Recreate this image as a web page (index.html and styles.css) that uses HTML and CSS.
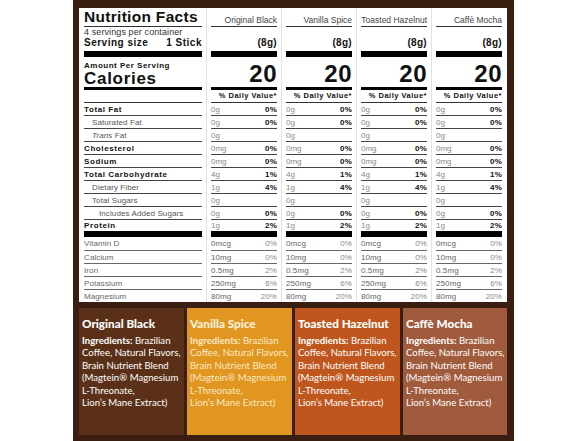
FILE: index.html
```html
<!DOCTYPE html>
<html>
<head>
<meta charset="utf-8">
<link rel="stylesheet" href="styles.css">
</head>
<body>
<div class="frame">
  <div class="panel">
    <div class="col label-col">
      <div class="r-head"><span class="title">Nutrition Facts</span></div>
      <div class="r-serv">
        <div class="servings">4 servings per container</div>
        <div class="serving-size"><span>Serving size</span><span>1 Stick</span></div>
      </div>
      <div class="bar-thick"></div>
      <div class="r-cal">
        <div class="amount">Amount Per Serving</div>
        <div class="calories">Calories</div>
      </div>
      <div class="bar-med"></div>
      <div class="r-dv"></div>
      <div class="row main">Total Fat</div>
      <div class="row sub">Saturated Fat</div>
      <div class="row sub"><span><i>Trans</i> Fat</span></div>
      <div class="row main">Cholesterol</div>
      <div class="row main">Sodium</div>
      <div class="row main">Total Carbohydrate</div>
      <div class="row sub">Dietary Fiber</div>
      <div class="row sub">Total Sugars</div>
      <div class="row sub2">Includes Added Sugars</div>
      <div class="row main last">Protein</div>
      <div class="bar-thick"></div>
      <div class="row vit first">Vitamin D</div>
      <div class="row vit">Calcium</div>
      <div class="row vit">Iron</div>
      <div class="row vit">Potassium</div>
      <div class="row vit end">Magnesium</div>
    </div>

    <div class="col data-col">
      <div class="r-head"><span class="flavor">Original Black</span></div>
      <div class="r-serv"><span class="grams">(8g)</span></div>
      <div class="bar-thick"></div>
      <div class="r-cal"><span class="cal-num">20</span></div>
      <div class="bar-med"></div>
      <div class="r-dv"><span class="dv">% Daily Value*</span></div>
      <div class="row"><span class="v">0g</span><span class="p">0%</span></div>
      <div class="row"><span class="v">0g</span><span class="p">0%</span></div>
      <div class="row"><span class="v">0g</span><span class="p"></span></div>
      <div class="row"><span class="v">0mg</span><span class="p">0%</span></div>
      <div class="row"><span class="v">0mg</span><span class="p">0%</span></div>
      <div class="row"><span class="v">4g</span><span class="p">1%</span></div>
      <div class="row"><span class="v">1g</span><span class="p">4%</span></div>
      <div class="row"><span class="v">0g</span><span class="p"></span></div>
      <div class="row"><span class="v">0g</span><span class="p">0%</span></div>
      <div class="row last"><span class="v">1g</span><span class="p">2%</span></div>
      <div class="bar-thick"></div>
      <div class="row vit first"><span class="v">0mcg</span><span class="vp">0%</span></div>
      <div class="row vit"><span class="v">10mg</span><span class="vp">0%</span></div>
      <div class="row vit"><span class="v">0.5mg</span><span class="vp">2%</span></div>
      <div class="row vit"><span class="v">250mg</span><span class="vp">6%</span></div>
      <div class="row vit end"><span class="v">80mg</span><span class="vp">20%</span></div>
    </div>

    <div class="col data-col">
      <div class="r-head"><span class="flavor">Vanilla Spice</span></div>
      <div class="r-serv"><span class="grams">(8g)</span></div>
      <div class="bar-thick"></div>
      <div class="r-cal"><span class="cal-num">20</span></div>
      <div class="bar-med"></div>
      <div class="r-dv"><span class="dv">% Daily Value*</span></div>
      <div class="row"><span class="v">0g</span><span class="p">0%</span></div>
      <div class="row"><span class="v">0g</span><span class="p">0%</span></div>
      <div class="row"><span class="v">0g</span><span class="p"></span></div>
      <div class="row"><span class="v">0mg</span><span class="p">0%</span></div>
      <div class="row"><span class="v">0mg</span><span class="p">0%</span></div>
      <div class="row"><span class="v">4g</span><span class="p">1%</span></div>
      <div class="row"><span class="v">1g</span><span class="p">4%</span></div>
      <div class="row"><span class="v">0g</span><span class="p"></span></div>
      <div class="row"><span class="v">0g</span><span class="p">0%</span></div>
      <div class="row last"><span class="v">1g</span><span class="p">2%</span></div>
      <div class="bar-thick"></div>
      <div class="row vit first"><span class="v">0mcg</span><span class="vp">0%</span></div>
      <div class="row vit"><span class="v">10mg</span><span class="vp">0%</span></div>
      <div class="row vit"><span class="v">0.5mg</span><span class="vp">2%</span></div>
      <div class="row vit"><span class="v">250mg</span><span class="vp">6%</span></div>
      <div class="row vit end"><span class="v">80mg</span><span class="vp">20%</span></div>
    </div>

    <div class="col data-col">
      <div class="r-head"><span class="flavor">Toasted Hazelnut</span></div>
      <div class="r-serv"><span class="grams">(8g)</span></div>
      <div class="bar-thick"></div>
      <div class="r-cal"><span class="cal-num">20</span></div>
      <div class="bar-med"></div>
      <div class="r-dv"><span class="dv">% Daily Value*</span></div>
      <div class="row"><span class="v">0g</span><span class="p">0%</span></div>
      <div class="row"><span class="v">0g</span><span class="p">0%</span></div>
      <div class="row"><span class="v">0g</span><span class="p"></span></div>
      <div class="row"><span class="v">0mg</span><span class="p">0%</span></div>
      <div class="row"><span class="v">0mg</span><span class="p">0%</span></div>
      <div class="row"><span class="v">4g</span><span class="p">1%</span></div>
      <div class="row"><span class="v">1g</span><span class="p">4%</span></div>
      <div class="row"><span class="v">0g</span><span class="p"></span></div>
      <div class="row"><span class="v">0g</span><span class="p">0%</span></div>
      <div class="row last"><span class="v">1g</span><span class="p">2%</span></div>
      <div class="bar-thick"></div>
      <div class="row vit first"><span class="v">0mcg</span><span class="vp">0%</span></div>
      <div class="row vit"><span class="v">10mg</span><span class="vp">0%</span></div>
      <div class="row vit"><span class="v">0.5mg</span><span class="vp">2%</span></div>
      <div class="row vit"><span class="v">250mg</span><span class="vp">6%</span></div>
      <div class="row vit end"><span class="v">80mg</span><span class="vp">20%</span></div>
    </div>

    <div class="col data-col">
      <div class="r-head"><span class="flavor">Caffè Mocha</span></div>
      <div class="r-serv"><span class="grams">(8g)</span></div>
      <div class="bar-thick"></div>
      <div class="r-cal"><span class="cal-num">20</span></div>
      <div class="bar-med"></div>
      <div class="r-dv"><span class="dv">% Daily Value*</span></div>
      <div class="row"><span class="v">0g</span><span class="p">0%</span></div>
      <div class="row"><span class="v">0g</span><span class="p">0%</span></div>
      <div class="row"><span class="v">0g</span><span class="p"></span></div>
      <div class="row"><span class="v">0mg</span><span class="p">0%</span></div>
      <div class="row"><span class="v">0mg</span><span class="p">0%</span></div>
      <div class="row"><span class="v">4g</span><span class="p">1%</span></div>
      <div class="row"><span class="v">1g</span><span class="p">4%</span></div>
      <div class="row"><span class="v">0g</span><span class="p"></span></div>
      <div class="row"><span class="v">0g</span><span class="p">0%</span></div>
      <div class="row last"><span class="v">1g</span><span class="p">2%</span></div>
      <div class="bar-thick"></div>
      <div class="row vit first"><span class="v">0mcg</span><span class="vp">0%</span></div>
      <div class="row vit"><span class="v">10mg</span><span class="vp">0%</span></div>
      <div class="row vit"><span class="v">0.5mg</span><span class="vp">2%</span></div>
      <div class="row vit"><span class="v">250mg</span><span class="vp">6%</span></div>
      <div class="row vit end"><span class="v">80mg</span><span class="vp">20%</span></div>
    </div>
  </div>

  <div class="cards">
    <div class="card black">
      <div class="card-title">Original Black</div>
      <p class="ingr"><b>Ingredients:</b> Brazilian<br>Coffee, Natural Flavors,<br>Brain Nutrient Blend<br>(Magtein® Magnesium<br>L-Threonate,<br>Lion’s Mane Extract)</p>
    </div>
    <div class="card vanilla">
      <div class="card-title">Vanilla Spice</div>
      <p class="ingr"><b>Ingredients:</b> Brazilian<br>Coffee, Natural Flavors,<br>Brain Nutrient Blend<br>(Magtein® Magnesium<br>L-Threonate,<br>Lion’s Mane Extract)</p>
    </div>
    <div class="card hazelnut">
      <div class="card-title">Toasted Hazelnut</div>
      <p class="ingr"><b>Ingredients:</b> Brazilian<br>Coffee, Natural Flavors,<br>Brain Nutrient Blend<br>(Magtein® Magnesium<br>L-Threonate,<br>Lion’s Mane Extract)</p>
    </div>
    <div class="card mocha">
      <div class="card-title">Caffè Mocha</div>
      <p class="ingr"><b>Ingredients:</b> Brazilian<br>Coffee, Natural Flavors,<br>Brain Nutrient Blend<br>(Magtein® Magnesium<br>L-Threonate,<br>Lion’s Mane Extract)</p>
    </div>
  </div>
</div>
</body>
</html>
```

FILE: styles.css
```css
* { box-sizing: border-box; }
html, body { margin: 0; padding: 0; background: #fff; }
body { font-family: "Liberation Sans", Arial, sans-serif; color: #111; }

.frame {
  width: 441px;
  height: 441px;
  margin-left: 73px;
  background: #3a1e12;
  padding: 8px 7px 6px 6px;
  display: flex;
  flex-direction: column;
  gap: 6px;
}

.panel {
  background: #fff;
  height: 294px;
  padding: 0 5px 0 5px;
  display: flex;
}

.col { display: flex; flex-direction: column; white-space: nowrap; }
.label-col { width: 118px; }
.data-col {
  width: 71px;
  margin-left: 4px;
  padding-left: 4px;
  border-left: 1px solid #e2e2e2;
}

/* header */
.r-head {
  height: 19px;
  border-bottom: 1px solid #333;
  display: flex;
  align-items: flex-end;
  justify-content: flex-end;
}
.label-col .r-head { justify-content: flex-start; }
.title {
  font-weight: bold;
  font-size: 15.5px;
  letter-spacing: 0.3px;
  line-height: 16px;
  padding-bottom: 1px;
}
.flavor {
  font-size: 8.5px;
  color: #444;
  line-height: 10px;
  padding-bottom: 1px;
}

/* serving */
.r-serv {
  height: 24px;
  display: flex;
  flex-direction: column;
  justify-content: flex-end;
  align-items: flex-end;
  padding-bottom: 3px;
}
.label-col .r-serv { align-items: stretch; }
.servings {
  font-size: 9px;
  line-height: 10px;
  color: #333;
  letter-spacing: 0.1px;
}
.serving-size {
  display: flex;
  justify-content: space-between;
  font-weight: bold;
  font-size: 10px;
  line-height: 11px;
  letter-spacing: 0.5px;
}
.grams {
  font-weight: bold;
  font-size: 10px;
  line-height: 11px;
  letter-spacing: 0.3px;
}

.bar-thick { height: 6px; background: #000; }
.bar-med { height: 3px; background: #000; }

/* calories */
.r-cal {
  height: 30px;
  display: flex;
  flex-direction: column;
  align-items: flex-end;
  justify-content: flex-end;
  padding-bottom: 2px;
}
.label-col .r-cal { align-items: flex-start; justify-content: space-between; padding-top: 4px; }
.amount {
  font-weight: bold;
  font-size: 8px;
  line-height: 9px;
  letter-spacing: 0.5px;
}
.calories {
  font-weight: bold;
  font-size: 17px;
  line-height: 17px;
  letter-spacing: 0.7px;
}
.cal-num {
  font-weight: bold;
  font-size: 24px;
  line-height: 22px;
  letter-spacing: 0.5px;
}

.r-dv {
  height: 13px;
  border-bottom: 1px solid #333;
  display: flex;
  justify-content: flex-end;
  align-items: center;
}
.dv {
  font-weight: bold;
  font-size: 7.5px;
  letter-spacing: 0.5px;
  line-height: 12px;
}

/* nutrient rows */
.row {
  height: 13px;
  border-bottom: 1px solid #444;
  display: flex;
  align-items: center;
  justify-content: space-between;
  font-size: 8px;
  line-height: 12px;
  padding-top: 1px;
}
.row.last { height: 11px; border-bottom: none; }
.row.main { font-weight: bold; letter-spacing: 0.6px; color: #111; }
.row.sub { padding-left: 8px; color: #555; letter-spacing: 0.1px; }
.row.sub2 { padding-left: 15px; color: #555; letter-spacing: 0.1px; }
.row.vit { color: #666; letter-spacing: 0.1px; border-bottom-color: #666; }
.row.vit.first { height: 14px; }
.row.vit.end { height: 12px; border-bottom: none; }
.v { color: #888; }
.row.vit .v { color: #666; }
.p { font-weight: bold; color: #111; letter-spacing: 0.2px; }
.vp { color: #888; }

/* cards */
.cards {
  height: 127px;
  display: flex;
  gap: 3px;
}
.card {
  flex: 0 0 105px;
  padding: 9px 0 0 3px;
  color: #fff;
  font-family: Lato, "Liberation Sans", sans-serif;
  white-space: nowrap;
  overflow: hidden;
}
.card.black { background: #5a3118; }
.card.vanilla { background: #e09620; color: #fde9c4; }
.card.hazelnut { background: #be561e; }
.card.mocha { background: #a05a3c; flex: 0 0 104px; }
.card-title {
  font-weight: 900;
  font-size: 11.7px;
  line-height: 13px;
}
.card.vanilla .card-title { color: #fff4de; }
.ingr {
  margin: 5px 0 0 0;
  font-size: 9.6px;
  line-height: 12.4px;
  font-weight: 400;
}
.ingr b { font-weight: 700; }
```
